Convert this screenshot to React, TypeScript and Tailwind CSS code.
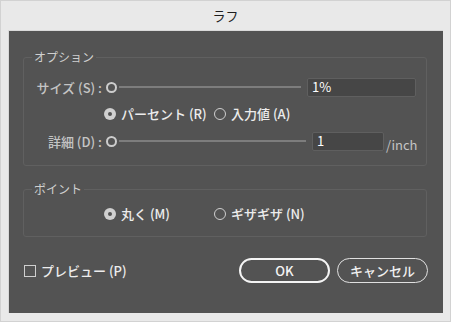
import React from 'react';

const font = { fontFamily: '"Noto Sans CJK JP", "Noto Sans", sans-serif' };

const Radio = ({ checked, label, w }: { checked?: boolean; label: string; w?: string }) => (
  <div className={`flex items-center gap-[5px] ${w ?? ''}`}>
    {checked ? (
      <span className="w-[12px] h-[12px] rounded-full bg-[#d0d0d0] flex items-center justify-center shrink-0">
        <span className="w-[4px] h-[4px] rounded-full bg-[#535353]" />
      </span>
    ) : (
      <span className="w-[12px] h-[12px] rounded-full border border-[#cfcfcf] shrink-0" />
    )}
    <span className="text-[13px] font-medium text-[#ececec] leading-none whitespace-nowrap">{label}</span>
  </div>
);

const SliderRow = ({
  label,
  value,
  trackW,
  inputW,
  unit,
}: {
  label: string;
  value: string;
  trackW: string;
  inputW: string;
  unit?: string;
}) => (
  <div className="flex items-center h-[20px]">
    <div className="w-[82px] text-right text-[13px] text-[#c4c4c4] font-medium leading-none pr-[4px] whitespace-nowrap">
      {label}
    </div>
    <span className="w-[11px] h-[11px] rounded-full border-2 border-[#cdcdcd] shrink-0" />
    <span className={`${trackW} h-[2px] bg-[#7d7d7d] ml-[2px]`} />
    <div
      className={`${inputW} h-[19px] ml-[6px] rounded-[2px] bg-[#464646] border border-[#5f5f5f] flex items-center px-[4px] text-[13px] text-white`}
    >
      {value}
    </div>
    {unit && <span className="ml-[2px] mt-[8px] text-[13px] text-[#c4c4c4]">{unit}</span>}
  </div>
);

export default function App() {
  return (
    <div style={font} className="w-[451px] h-[322px] bg-[#e9e9e9] border border-[#d2d2d2] flex flex-col">
      <div className="h-[29px] flex items-center justify-center text-[13px] text-[#1e1e1e]">ラフ</div>
      <div className="ml-[7px] w-[435px] h-[283px] bg-[#535353] border border-[#d9d9d9] border-b-0 border-r-0 flex flex-col">
        <fieldset className="mt-[20px] ml-[14px] w-[404px] h-[115px] border border-[#606060] rounded-[3px] pl-0">
          <legend className="ml-[8px] px-[2px] text-[12px] text-[#cfcfcf] leading-none">オプション</legend>
          <div className="mt-[14px]">
            <SliderRow label="サイズ (S) :" value="1%" trackW="w-[182px]" inputW="w-[109px]" />
          </div>
          <div className="mt-[10px] ml-[80px] flex items-center">
            <Radio checked label="パーセント (R)" w="w-[110px]" />
            <Radio label="入力値 (A)" />
          </div>
          <div className="mt-[11px]">
            <SliderRow label="詳細 (D) :" value="1" trackW="w-[187px]" inputW="w-[72px]" unit="/inch" />
          </div>
        </fieldset>
        <fieldset className="mt-[17px] ml-[14px] w-[404px] h-[54px] border border-[#606060] rounded-[3px]">
          <legend className="ml-[8px] px-[2px] text-[12px] text-[#cfcfcf] leading-none">ポイント</legend>
          <div className="mt-[12px] ml-[80px] flex items-center">
            <Radio checked label="丸く (M)" w="w-[110px]" />
            <Radio label="ギザギザ (N)" />
          </div>
        </fieldset>
        <div className="mt-[21px] flex items-center">
          <div className="ml-[15px] flex items-center gap-[5px]">
            <span className="w-[12px] h-[12px] border border-[#cfcfcf]" />
            <span className="text-[13px] font-medium text-[#ececec]">プレビュー (P)</span>
          </div>
          <button className="ml-auto w-[91px] h-[25px] rounded-full border-2 border-[#f4f4f4] text-[13px] font-medium text-[#f4f4f4]">
            OK
          </button>
          <button className="ml-[7px] mr-[15px] w-[91px] h-[25px] rounded-full border border-[#e0e0e0] text-[13px] font-medium text-[#f0f0f0]">
            キャンセル
          </button>
        </div>
      </div>
    </div>
  );
}
